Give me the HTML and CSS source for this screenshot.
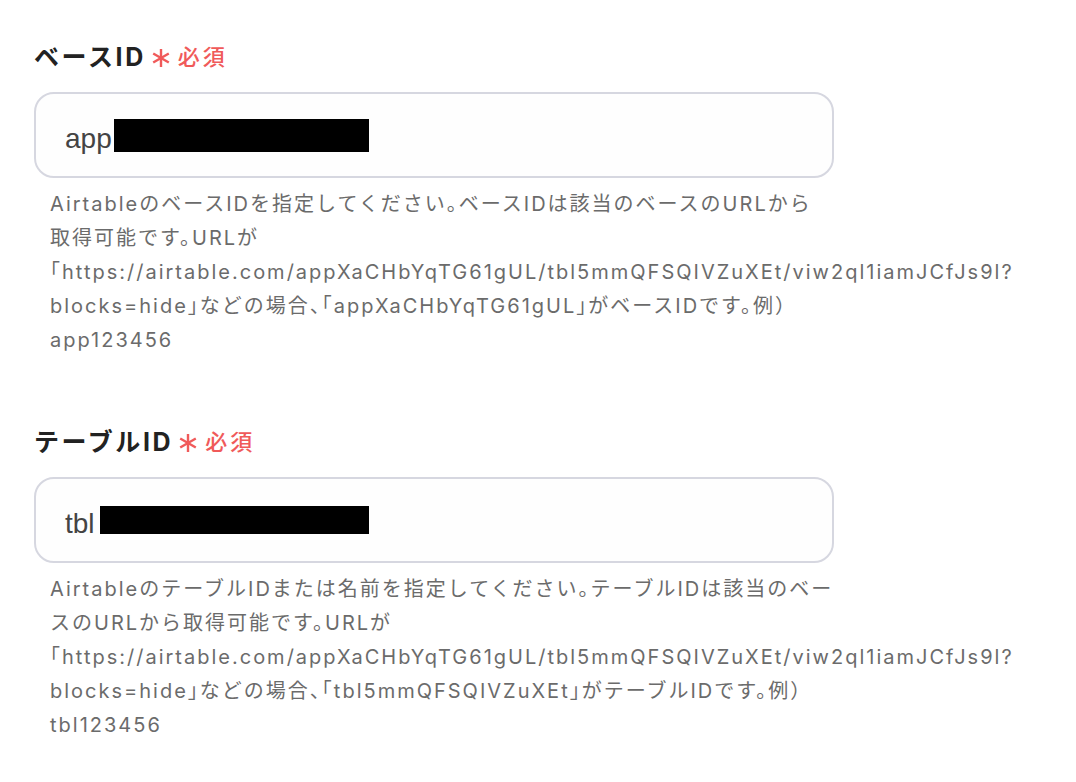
FILE: index.html
```html
<!DOCTYPE html>
<html lang="ja">
<head>
<meta charset="utf-8">
<link rel="stylesheet" href="styles.css">
</head>
<body>
<div class="form">
  <div class="field">
    <div class="label"><span class="label-text">ベースID</span><span class="req"><svg class="ast" viewBox="0 0 20 20" width="20" height="20"><g stroke="#f05a5a" stroke-width="2.4" stroke-linecap="butt"><line x1="10" y1="1" x2="10" y2="19"/><line x1="2.2" y1="5.5" x2="17.8" y2="14.5"/><line x1="2.2" y1="14.5" x2="17.8" y2="5.5"/></g></svg><span class="req-text">必須</span></span></div>
    <div class="input"><span class="val">app</span><span class="redact redact-1"></span></div>
    <p class="help">AirtableのベースIDを指定してください。ベースIDは該当のベースのURLから取得可能です。URLが「https://airtable.com/appXaCHbYqTG61gUL/tbl5mmQFSQIVZuXEt/viw2ql1iamJCfJs9l?blocks=hide」などの場合、「appXaCHbYqTG61gUL」がベースIDです。例）app123456</p>
  </div>
  <div class="field">
    <div class="label"><span class="label-text">テーブルID</span><span class="req"><svg class="ast" viewBox="0 0 20 20" width="20" height="20"><g stroke="#f05a5a" stroke-width="2.4" stroke-linecap="butt"><line x1="10" y1="1" x2="10" y2="19"/><line x1="2.2" y1="5.5" x2="17.8" y2="14.5"/><line x1="2.2" y1="14.5" x2="17.8" y2="5.5"/></g></svg><span class="req-text">必須</span></span></div>
    <div class="input"><span class="val">tbl</span><span class="redact redact-2"></span></div>
    <p class="help">AirtableのテーブルIDまたは名前を指定してください。テーブルIDは該当のベースのURLから取得可能です。URLが「https://airtable.com/appXaCHbYqTG61gUL/tbl5mmQFSQIVZuXEt/viw2ql1iamJCfJs9l?blocks=hide」などの場合、「tbl5mmQFSQIVZuXEt」がテーブルIDです。例）tbl123456</p>
  </div>
</div>
</body>
</html>
```
FILE: styles.css
```css
html, body {
  margin: 0;
  padding: 0;
  background: #ffffff;
}
body {
  font-family: Inter, "Noto Sans CJK JP", sans-serif;
}
.form {
  padding: 39px 0 0 34px;
  width: 800px;
}
.field {
  margin-bottom: 67px;
}
.label {
  display: flex;
  align-items: center;
  height: 32px;
  margin-bottom: 21px;
}
.label-text {
  font-size: 25px;
  font-weight: 700;
  color: #222222;
  letter-spacing: 2.6px;
}
.req {
  display: flex;
  align-items: center;
  margin-left: 5px;
  color: #f05a5a;
}
.ast {
  display: block;
  margin-top: 6px;
  margin-right: 7px;
}
.req-text {
  font-size: 22px;
  font-weight: 500;
  letter-spacing: 3px;
}
.input {
  box-sizing: border-box;
  height: 86px;
  border: 2px solid #d6d7e0;
  border-radius: 20px;
  background: #fefefe;
  display: flex;
  align-items: center;
  padding-left: 29px;
}
.val {
  font-family: "Liberation Sans", Arial, sans-serif;
  font-size: 28px;
  color: #444444;
  margin-top: 8px;
}
.redact {
  display: inline-block;
  background: #000000;
}
.redact-1 {
  width: 255px;
  height: 33px;
  margin-left: 2px;
}
.redact-2 {
  width: 269px;
  height: 28px;
  margin-left: 5px;
}
.help {
  margin: 9px 0 0 16px;
  font-size: 20px;
  line-height: 34px;
  color: #6b6b6b;
  letter-spacing: 2px;
  font-feature-settings: "halt";
  width: 783.5px;
}
```
